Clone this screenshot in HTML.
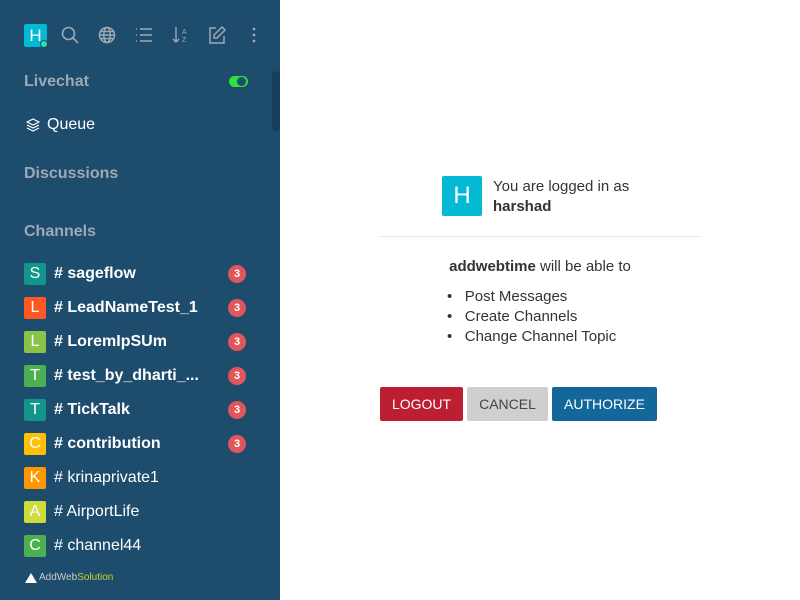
<!DOCTYPE html>
<html><head><meta charset="utf-8"><style>
*{margin:0;padding:0;box-sizing:border-box}
body{width:800px;height:600px;overflow:hidden;font-family:"Liberation Sans",sans-serif;background:#fff;position:relative}
#sb{position:absolute;left:0;top:0;width:280px;height:600px;background:#1d4c6d;color:#fff}
.ic{position:absolute;top:25px}
.hdr{position:absolute;left:24px;font-weight:bold;font-size:16px;color:#9ea9b4}
.row{position:absolute;left:24px;height:22px;display:flex;align-items:center;font-size:16px}
.av{width:22px;height:22px;border-radius:2px;color:#fff;font-size:16px;font-weight:normal;display:flex;align-items:center;justify-content:center;margin-right:8px}
.b{font-weight:bold}
.badge{position:absolute;left:228px;width:18px;height:18px;border-radius:9px;background:#e0565d;color:#fff;font-size:11px;font-weight:bold;display:flex;align-items:center;justify-content:center}
#main{position:absolute;left:280px;top:0;width:520px;height:600px;color:#333}
.btn{position:absolute;top:387px;height:34px;font-size:14px;display:flex;align-items:center;justify-content:center;border-radius:2px}
</style></head><body>
<div id="sb">
<div style="position:absolute;left:24px;top:24px;width:23px;height:23px;background:#03b9d3;border-radius:2px;font-size:17px;display:flex;align-items:center;justify-content:center">H</div>
<div style="position:absolute;left:40px;top:40px;width:8px;height:8px;border-radius:4px;background:#2de0a5;border:1px solid #1d4c6d"></div>
<svg class="ic" style="left:60px" width="20" height="20" viewBox="0 0 20 20" fill="none" stroke="#9ea9b4" stroke-width="1.6"><circle cx="8.5" cy="8.5" r="6"/><path d="M13 13l5 5"/></svg>
<svg class="ic" style="left:97px" width="20" height="20" viewBox="0 0 20 20" fill="none" stroke="#9ea9b4" stroke-width="1.5"><circle cx="10" cy="10" r="7.5"/><ellipse cx="10" cy="10" rx="3.2" ry="7.5"/><path d="M2.5 10h15M3.5 6.5h13M3.5 13.5h13"/></svg>
<svg class="ic" style="left:134px" width="20" height="20" viewBox="0 0 20 20" fill="none" stroke="#9ea9b4" stroke-width="1.5"><path d="M2 4h1M2 10h1M2 16h1M6 4h12M6 10h12M6 16h12"/></svg>
<svg class="ic" style="left:171px" width="20" height="20" viewBox="0 0 20 20" fill="none" stroke="#9ea9b4" stroke-width="1.4"><path d="M5 2v15M2 14l3 3 3-3"/><text x="11" y="9" font-size="7" fill="#9ea9b4" stroke="none" font-family="Liberation Sans">A</text><text x="11" y="17" font-size="7" fill="#9ea9b4" stroke="none" font-family="Liberation Sans">Z</text></svg>
<svg class="ic" style="left:207px" width="20" height="20" viewBox="0 0 20 20" fill="none" stroke="#9ea9b4" stroke-width="1.5"><path d="M9 3H3v15h14v-7"/><path d="M15 2l3 3-8 8H7v-3z"/></svg>
<svg class="ic" style="left:244px" width="20" height="20" viewBox="0 0 20 20" fill="#9ea9b4"><circle cx="10" cy="4" r="1.4"/><circle cx="10" cy="10" r="1.4"/><circle cx="10" cy="16" r="1.4"/></svg>
<div class="hdr" style="top:73px">Livechat</div>
<div style="position:absolute;left:229px;top:76px;width:19px;height:11px;border-radius:6px;background:#2de03a"></div>
<div style="position:absolute;left:237px;top:77px;width:9px;height:9px;border-radius:5px;background:#1d4c6d"></div>
<div style="position:absolute;left:272px;top:71px;width:8px;height:60px;border-radius:4px;background:#173f5b"></div>
<div class="row" style="top:114px"><svg width="14" height="14" viewBox="0 0 14 14" fill="none" stroke="#fff" stroke-width="1.2" style="margin-right:7px;margin-left:2px"><path d="M7 1l6 3-6 3-6-3z"/><path d="M1 7l6 3 6-3M1 10l6 3 6-3"/></svg>Queue</div>
<div class="hdr" style="top:165px">Discussions</div>
<div class="hdr" style="top:223px">Channels</div>
<div class="row b" style="top:263px"><div class="av" style="background:#13968a">S</div># sageflow</div><div class="badge" style="top:265px">3</div>
<div class="row b" style="top:297px"><div class="av" style="background:#fe5722">L</div># LeadNameTest_1</div><div class="badge" style="top:299px">3</div>
<div class="row b" style="top:331px"><div class="av" style="background:#8bc34a">L</div># LoremIpSUm</div><div class="badge" style="top:333px">3</div>
<div class="row b" style="top:365px"><div class="av" style="background:#4caf50">T</div># test_by_dharti_...</div><div class="badge" style="top:367px">3</div>
<div class="row b" style="top:399px"><div class="av" style="background:#13968a">T</div># TickTalk</div><div class="badge" style="top:401px">3</div>
<div class="row b" style="top:433px"><div class="av" style="background:#ffc107">C</div># contribution</div><div class="badge" style="top:435px">3</div>
<div class="row" style="top:467px"><div class="av" style="background:#ff9800">K</div># krinaprivate1</div>
<div class="row" style="top:501px"><div class="av" style="background:#cddc39">A</div># AirportLife</div>
<div class="row" style="top:535px;height:22px;overflow:hidden"><div class="av" style="background:#4caf50">C</div># channel44</div>
<div style="position:absolute;left:25px;top:572px;font-size:10px;color:#ccc;display:flex;align-items:center"><svg width="12" height="10" viewBox="0 0 12 10" style="margin-right:2px"><path d="M6 0L12 10H0z" fill="#fff"/></svg>AddWeb<span style="color:#c5d531">Solution</span></div>
</div>
<div id="main">
<div style="position:absolute;left:162px;top:176px;width:40px;height:40px;background:#03b9d3;border-radius:2px;color:#fff;font-size:24px;display:flex;align-items:center;justify-content:center">H</div>
<div style="position:absolute;left:213px;top:177px;font-size:15px;line-height:20px">You are logged in as<br><b>harshad</b></div>
<div style="position:absolute;left:100px;top:236px;width:320px;height:1px;background:#e6e6e6"></div>
<div style="position:absolute;left:0;width:520px;top:258px;text-align:center;font-size:15px"><b>addwebtime</b> will be able to</div>
<div style="position:absolute;left:167px;top:287px;font-size:15px;line-height:20px">
<div>•&nbsp;&nbsp;&nbsp;Post Messages</div><div>•&nbsp;&nbsp;&nbsp;Create Channels</div><div>•&nbsp;&nbsp;&nbsp;Change Channel Topic</div></div>
<div class="btn" style="left:100px;width:83px;background:#bc1f31;color:#fff">LOGOUT</div>
<div class="btn" style="left:187px;width:81px;background:#cfcfcf;color:#444">CANCEL</div>
<div class="btn" style="left:272px;width:105px;background:#13679a;color:#fff">AUTHORIZE</div>
</div>
</body></html>
